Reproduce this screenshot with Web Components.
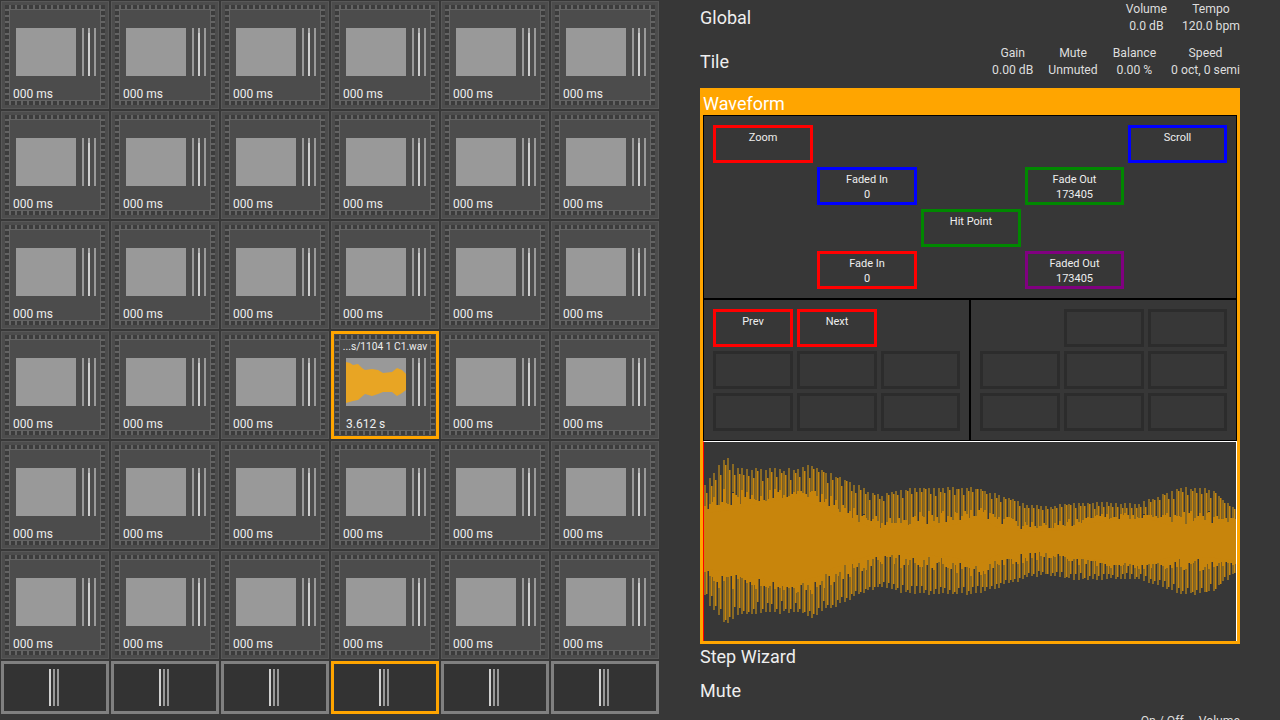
<!DOCTYPE html>
<html>
<head>
<meta charset="utf-8">
<title>Tiles</title>
<style>
    html, body {
        margin: 0;
        height: 720px;
        overflow: hidden;
        background: #373737;
        color: #eee;
        font-family: Roboto, "Liberation Sans", sans-serif;
    }
</style>
</head>
<body>
<sampler-app></sampler-app>
<script>
class SamplerApp extends HTMLElement {
    constructor() {
        super();
        this.attachShadow({ mode: 'open' });
    }

    connectedCallback() {
        this.shadowRoot.innerHTML = `
            <style>
                :host {
                    display: flex;
                    width: 1280px;
                    height: 720px;
                    overflow: hidden;
                }
                .right {
                    width: 540px;
                    margin-left: 40px;
                    flex: none;
                }
            </style>
            <tile-grid></tile-grid>
            <div class="right">
                <info-row title="Global" stats="Volume:0.0 dB|Tempo:120.0 bpm"></info-row>
                <info-row title="Tile" stats="Gain:0.00 dB|Mute:Unmuted|Balance:0.00 %|Speed:0 oct, 0 semi"></info-row>
                <waveform-panel></waveform-panel>
                <section-title>Step Wizard</section-title>
                <section-title>Mute</section-title>
                <info-row stats="On / Off:|Volume:"></info-row>
            </div>
        `;
    }
}

class TileGrid extends HTMLElement {
    constructor() {
        super();
        this.attachShadow({ mode: 'open' });
    }

    connectedCallback() {
        let tiles = '';
        for (let row = 0; row < 6; row++) {
            for (let col = 0; col < 6; col++) {
                tiles += row === 3 && col === 3
                    ? '<sample-tile selected name="...s/1104 1 C1.wav" label="3.612 s"></sample-tile>'
                    : '<sample-tile label="000 ms"></sample-tile>';
            }
        }
        for (let col = 0; col < 6; col++) {
            tiles += col === 3 ? '<column-cell selected></column-cell>' : '<column-cell></column-cell>';
        }
        this.shadowRoot.innerHTML = `
            <style>
                :host {
                    display: grid;
                    grid-template-columns: repeat(6, 108px);
                    grid-template-rows: repeat(6, 108px) 53px;
                    gap: 2px;
                    padding: 1px;
                    width: 658px;
                    flex: none;
                }
            </style>
            ${tiles}
        `;
    }
}

class SampleTile extends HTMLElement {
    constructor() {
        super();
        this.attachShadow({ mode: 'open' });
    }

    connectedCallback() {
        const name = this.getAttribute('name');
        const label = this.getAttribute('label');
        const wave = name ? `
            <svg viewBox="0 0 60 48" width="60" height="48">
                <polygon fill="#e8a524" points="0,4 4,5 7,7 12,6 16,10 19,12 26,11 32,12 37,15 46,14 51,10 56,12 60,16 60,32 56,35 51,38 46,34 37,34 32,36 26,38 19,36 12,42 7,43 0,45"/>
            </svg>` : '';
        this.shadowRoot.innerHTML = `
            <style>
                :host {
                    display: block;
                    box-sizing: border-box;
                    width: 108px;
                    height: 108px;
                    padding: 4px;
                    background: #4c4c4c;
                    box-shadow: inset 0 0 0 1px #585858;
                }
                :host([selected]) {
                    padding: 1px;
                    border: 3px solid #ffa500;
                    box-shadow: none;
                }
                .film {
                    box-sizing: border-box;
                    height: 100%;
                    padding: 5px;
                    --holes: #3c3c3c 0 4px, #636363 4px 6px;
                    background:
                        repeating-linear-gradient(90deg, var(--holes)) 0 0 / 100% 4px no-repeat,
                        repeating-linear-gradient(90deg, var(--holes)) 0 100% / 100% 4px no-repeat,
                        repeating-linear-gradient(180deg, var(--holes)) 0 0 / 4px 100% no-repeat,
                        repeating-linear-gradient(180deg, var(--holes)) 100% 0 / 4px 100% no-repeat,
                        #636363;
                }
                .inner {
                    height: 100%;
                    background: #4c4c4c;
                    box-sizing: border-box;
                    padding: 0 6px;
                    display: flex;
                    flex-direction: column;
                }
                .inner > * { flex: none; }
                .name {
                    height: 18px;
                    margin: 0 -6px;
                    text-align: center;
                    font-size: 10.2px;
                    line-height: 13px;
                    padding-top: 0;
                    white-space: nowrap;
                    color: #eee;
                }
                .view {
                    display: flex;
                    height: 48px;
                }
                .preview {
                    width: 60px;
                    height: 48px;
                    background: #999;
                    flex: none;
                }
                .preview svg { display: block; }
                .bars {
                    display: flex;
                    gap: 4px;
                    margin-left: 6px;
                }
                .bars i {
                    width: 2px;
                    background: #999;
                }
                .bars i:nth-child(2) {
                    background: linear-gradient(#aaa 0 5px, #d0d0d0 5px);
                }
                .label {
                    margin: 11px 0 0 -3px;
                    font-size: 12px;
                    line-height: 15px;
                    white-space: nowrap;
                    color: #eee;
                }
                :host([selected]) .label { margin-left: 0; }
            </style>
            <div class="film">
                <div class="inner">
                    <div class="name">${name || ''}</div>
                    <div class="view">
                        <div class="preview">${wave}</div>
                        <div class="bars"><i></i><i></i><i></i></div>
                    </div>
                    <div class="label">${label}</div>
                </div>
            </div>
        `;
    }
}

class ColumnCell extends HTMLElement {
    constructor() {
        super();
        this.attachShadow({ mode: 'open' });
    }

    connectedCallback() {
        this.shadowRoot.innerHTML = `
            <style>
                :host {
                    display: flex;
                    justify-content: center;
                    align-items: center;
                    gap: 2px;
                    box-sizing: border-box;
                    width: 108px;
                    height: 53px;
                    padding-right: 2px;
                    border: 3px solid #808080;
                    background: #333;
                }
                :host([selected]) { border-color: #ffa500; }
                i {
                    width: 2px;
                    height: 37px;
                    background: #999;
                }
                i:nth-child(2) { background: #d0d0d0; }
            </style>
            <i></i><i></i><i></i>
        `;
    }
}

class InfoRow extends HTMLElement {
    constructor() {
        super();
        this.attachShadow({ mode: 'open' });
    }

    connectedCallback() {
        const stats = (this.getAttribute('stats') || '').split('|').map(s => {
            const [label, value] = s.split(':');
            return `<div class="stat"><div>${label}</div><div class="value">${value}</div></div>`;
        }).join('');
        this.shadowRoot.innerHTML = `
            <style>
                :host {
                    display: flex;
                    align-items: center;
                    justify-content: space-between;
                    height: 44px;
                    box-sizing: border-box;
                    padding-bottom: 9px;
                }
                .title {
                    font-size: 18px;
                    color: #eee;
                }
                .stats {
                    display: flex;
                    gap: 15px;
                    align-self: flex-start;
                    margin-top: 1px;
                }
                .stat {
                    text-align: center;
                    font-size: 12.2px;
                    line-height: 17px;
                    color: #ddd;
                    white-space: nowrap;
                }
                .value { min-height: 17px; }
            </style>
            <div class="title">${this.getAttribute('title') || ''}</div>
            <div class="stats">${stats}</div>
        `;
    }
}

class SectionTitle extends HTMLElement {
    constructor() {
        super();
        this.attachShadow({ mode: 'open' });
        this.shadowRoot.innerHTML = `
            <style>
                :host {
                    display: block;
                    height: 34px;
                    font-size: 18px;
                    line-height: 26px;
                    color: #eee;
                }
            </style>
            <slot></slot>
        `;
    }
}

class WaveformPanel extends HTMLElement {
    constructor() {
        super();
        this.attachShadow({ mode: 'open' });
    }

    connectedCallback() {
        const empty = '<pad-button color="#2c2c2c"></pad-button>';
        this.shadowRoot.innerHTML = `
            <style>
                :host {
                    display: block;
                    box-sizing: border-box;
                    height: 556px;
                    border: 3px solid #ffa500;
                    background: #373737;
                }
                .head {
                    height: 24px;
                    background: #ffa500;
                    font-size: 18px;
                    line-height: 26px;
                    color: #fff;
                }
                .markers {
                    display: grid;
                    grid-template-columns: 100px 100px 100px 99px 99px;
                    grid-template-rows: repeat(4, 38px);
                    gap: 4px;
                    padding: 9px;
                    border: 1px solid #000;
                }
                .markers .c1 { grid-column: 1; }
                .markers .c2 { grid-column: 2; }
                .markers .c3 { grid-column: 3; }
                .markers .c4 { grid-column: 4; }
                .markers .c5 { grid-column: 5; }
                .markers .r1 { grid-row: 1; }
                .markers .r2 { grid-row: 2; }
                .markers .r3 { grid-row: 3; }
                .markers .r4 { grid-row: 4; }
                .pads {
                    display: grid;
                    grid-template-columns: 1fr 1fr;
                }
                .pad-box {
                    display: grid;
                    grid-template-columns: 80px 80px 79px;
                    grid-template-rows: repeat(3, 38px);
                    gap: 4px;
                    padding: 9px;
                    border: 1px solid #000;
                }
                .skip { grid-column: 2; }
                .first { grid-column: 1; }
            </style>
            <div class="head">Waveform</div>
            <div class="markers">
                <pad-button class="c1 r1" color="#f00" line1="Zoom"></pad-button>
                <pad-button class="c5 r1" color="#00f" line1="Scroll"></pad-button>
                <pad-button class="c2 r2" color="#00f" line1="Faded In" line2="0"></pad-button>
                <pad-button class="c4 r2" color="#080" line1="Fade Out" line2="173405"></pad-button>
                <pad-button class="c3 r3" color="#080" line1="Hit Point"></pad-button>
                <pad-button class="c2 r4" color="#f00" line1="Fade In" line2="0"></pad-button>
                <pad-button class="c4 r4" color="#800080" line1="Faded Out" line2="173405"></pad-button>
            </div>
            <div class="pads">
                <div class="pad-box">
                    <pad-button color="#f00" line1="Prev"></pad-button>
                    <pad-button color="#f00" line1="Next"></pad-button>
                    <pad-button class="first" color="#2c2c2c"></pad-button>
                    ${empty}${empty}${empty}${empty}${empty}
                </div>
                <div class="pad-box">
                    <pad-button class="skip" color="#2c2c2c"></pad-button>
                    ${empty}${empty}${empty}${empty}${empty}${empty}${empty}
                </div>
            </div>
            <waveform-view></waveform-view>
        `;
    }
}

class PadButton extends HTMLElement {
    constructor() {
        super();
        this.attachShadow({ mode: 'open' });
    }

    connectedCallback() {
        const line1 = this.getAttribute('line1') || '';
        const line2 = this.getAttribute('line2') || '';
        this.shadowRoot.innerHTML = `
            <style>
                :host {
                    display: block;
                    box-sizing: border-box;
                    height: 38px;
                    border: 3px solid ${this.getAttribute('color')};
                    padding-top: 2px;
                    text-align: center;
                    font-size: 11px;
                    line-height: 15px;
                    color: #eee;
                    white-space: nowrap;
                }
            </style>
            <div>${line1}</div>
            <div>${line2}</div>
        `;
    }
}

// half heights of the clip, read off the reference as [x, amplitude]
const OUTER = [[0, 56], [7, 68], [21, 84], [37, 74], [67, 73], [92, 73], [102, 76], [107, 77], [112, 76], [122, 69], [137, 64], [152, 56], [167, 49], [177, 47], [187, 49], [197, 53], [217, 54], [272, 54], [287, 49], [302, 44], [327, 36], [342, 35], [362, 38], [377, 39], [397, 39], [417, 38], [432, 38], [447, 43], [462, 49], [477, 54], [497, 54], [507, 51], [522, 39], [533, 31]];
const CORE = [[0, 28], [17, 30], [47, 36], [77, 41], [92, 41], [112, 36], [132, 26], [152, 18], [177, 11], [197, 12], [247, 16], [272, 23], [297, 13], [327, 9], [357, 11], [387, 18], [417, 21], [447, 21], [467, 16], [497, 16], [533, 19]];

function lookup(table, x) {
    for (let i = 1; i < table.length; i++) {
        if (x <= table[i][0]) {
            const [x0, y0] = table[i - 1];
            const [x1, y1] = table[i];
            const t = (x - x0) / (x1 - x0);
            return y0 + (y1 - y0) * (t * t * (3 - 2 * t));
        }
    }
    return table[table.length - 1][1];
}

class WaveformView extends HTMLElement {
    constructor() {
        super();
        this.attachShadow({ mode: 'open' });
    }

    connectedCallback() {
        this.shadowRoot.innerHTML = `
            <style>
                :host {
                    display: block;
                    box-sizing: border-box;
                    height: 200px;
                    border-top: 1px solid #fff;
                    border-right: 1px solid #fff;
                    border-left: 1px solid #f00;
                    overflow: hidden;
                }
                canvas { display: block; }
            </style>
            <canvas width="532" height="199"></canvas>
        `;
        this.draw(this.shadowRoot.querySelector('canvas').getContext('2d'));
    }

    draw(ctx) {
        const mid = 99;
        const bright = '#c8850c';
        const dim = '#8a6a24';
        const noise = n => {
            const v = Math.sin(n * 12.9898) * 43758.5453;
            return v - Math.floor(v);
        };
        // one half of a column, direction -1 goes up and 1 goes down
        const span = (x, w, from, to, dir, color) => {
            ctx.fillStyle = color;
            ctx.fillRect(x, Math.round(dir < 0 ? mid - to : mid + from), w, Math.round(to - from));
        };

        const pitch = 4.67;
        for (let i = 0; i * pitch < 534; i++) {
            const x = Math.round(i * pitch);
            const period = Math.round((i + 1) * pitch) - x;
            const outer = lookup(OUTER, x);
            const core = lookup(CORE, x);
            [-1, 1].forEach((dir, side) => {
                const n = i * 2 + side;
                // floor of the dark notches
                const floor = core + (outer - core) * (0.05 + 0.3 * noise(n + 50));
                span(x, period, 0, floor, dir, bright);
                // bright tooth next to the dim peak
                span(x + 2, 1.5, 0, outer * (0.82 + 0.14 * noise(n + 100)), dir, bright);
                // dim peak that cuts down into the bright mass
                const peak = outer * (0.96 + 0.04 * noise(n + 150));
                const low = core + (outer - core) * (0.02 + 0.4 * noise(n + 200));
                span(x, 2, 0, low, dir, bright);
                span(x, 2, low, peak, dir, dim);
            });
        }
        ctx.fillStyle = bright;
        for (let x = 0; x < 533; x++) {
            const core = lookup(CORE, x);
            ctx.fillRect(x, mid - core, 1, core * 2);
        }
    }
}

customElements.define('sampler-app', SamplerApp);
customElements.define('tile-grid', TileGrid);
customElements.define('sample-tile', SampleTile);
customElements.define('column-cell', ColumnCell);
customElements.define('info-row', InfoRow);
customElements.define('section-title', SectionTitle);
customElements.define('waveform-panel', WaveformPanel);
customElements.define('pad-button', PadButton);
customElements.define('waveform-view', WaveformView);
</script>
</body>
</html>
